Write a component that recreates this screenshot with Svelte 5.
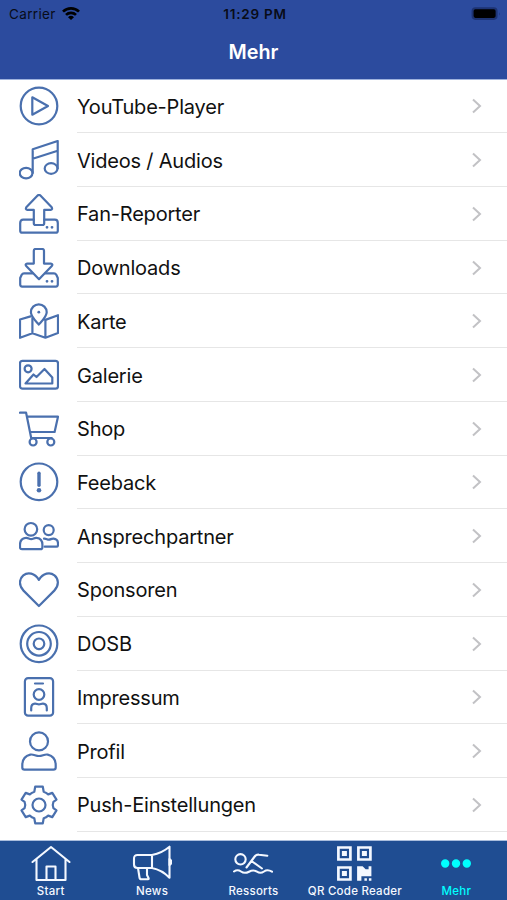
<script>
  const items = [
    { label: 'YouTube-Player', icon: 'play' },
    { label: 'Videos / Audios', icon: 'music' },
    { label: 'Fan-Reporter', icon: 'upload' },
    { label: 'Downloads', icon: 'download' },
    { label: 'Karte', icon: 'map' },
    { label: 'Galerie', icon: 'gallery' },
    { label: 'Shop', icon: 'cart' },
    { label: 'Feeback', icon: 'alert' },
    { label: 'Ansprechpartner', icon: 'people' },
    { label: 'Sponsoren', icon: 'heart' },
    { label: 'DOSB', icon: 'target' },
    { label: 'Impressum', icon: 'badge' },
    { label: 'Profil', icon: 'user' },
    { label: 'Push-Einstellungen', icon: 'gear' }
  ];

  const tabs = [
    { label: 'Start', icon: 'home' },
    { label: 'News', icon: 'news' },
    { label: 'Ressorts', icon: 'swim' },
    { label: 'QR Code Reader', icon: 'qr' },
    { label: 'Mehr', icon: 'more' }
  ];

  let active = $state('Mehr');
</script>

<div class="screen">
  <header>
    <div class="status">
      <div class="carrier">
        <span>Carrier</span>
        <svg width="18" height="14" viewBox="0 0 18 14">
          <g fill="none" stroke="#000" stroke-width="2.7">
            <path d="M1 4.6a11.5 11.5 0 0 1 16 0" />
            <path d="M4 7.9a7.2 7.2 0 0 1 10 0" />
          </g>
          <path d="M9 13L6 10.200a4.300 4.300 0 0 1 6 0z" />
        </svg>
      </div>
      <div class="time">11:29 PM</div>
      <div class="battery">
        <svg width="30" height="14" viewBox="0 0 30 14">
          <rect x="0.6" y="0.3" width="26" height="12.6" rx="3.8" fill="#1d3373" />
          <rect x="2.6" y="2.3" width="22" height="8.6" rx="1.8" />
          <path d="M28.200 5.200q1.400 1.700 0 3.400z" fill="#1d3373" />
        </svg>
      </div>
    </div>
    <h1>Mehr</h1>
  </header>

  <ul class="list">
    {#each items as item}
      <li>
        <svg class="icon" viewBox="0 0 40 40">
          {#if item.icon === 'play'}
            <circle cx="20" cy="20" r="18.3" />
            <path d="M13.3 11.3v17.4L29 20z" />
          {:else if item.icon === 'music'}
            <path d="M13.7 33V9.2L38.7 1v27.4M13.7 18.8l25-8" />
            <ellipse cx="7.1" cy="33.1" rx="6.4" ry="5.3" />
            <ellipse cx="32.1" cy="28.5" rx="6.4" ry="5.3" />
          {:else if item.icon === 'upload'}
            <path d="M14.8 25.7H4.2Q1.2 25.7 1.2 29v7.700a2 2 0 0 0 2 2h33.600a2 2 0 0 0 2-2V29q0-3.300-3-3.300H25.200" />
            <path d="M18.600 1.600L7.300 13.300q-1.200 2.400 1.200 2.600h6.300v13.400q0 1.700 1.700 1.700h7q1.700 0 1.700-1.700V15.900h6.300q2.400-.2 1.200-2.600L21.400 1.600q-1.400-1.400-2.800 0z" />
            <path class="dots" d="M28 33.300h.01M33 33.300h.01" />
          {:else if item.icon === 'download'}
            <path d="M13.600 25.300H5q-1.500 0-2.300 1.400L1.200 30v6.600a2 2 0 0 0 2 2h33.600a2 2 0 0 0 2-2V30l-1.500-3.300q-.8-1.400-2.300-1.400h-8.600" />
            <path d="M16.500 1h6.800q1.700 0 1.700 1.700v12.900h6.800q2.400.2 1 2.400L20 31.200 7.200 18q-1.400-2.200 1-2.400h6.600V2.700Q14.800 1 16.500 1z" />
            <path class="dots" d="M28 33.300h.01M33 33.300h.01" />
          {:else if item.icon === 'map'}
            <path d="M11.500 15.400L1 18.500v18.300l12.400-4.600 13 4.500L39 32V14.200l-12.600 4.700-.8-.3M13.400 17v15.200M26.400 18.900v17.800" />
            <path d="M19.800 23.600C17 20.300 11.900 15.600 11.900 11.200a7.900 7.900 0 0 1 15.800 0c0 4.400-5.100 9.100-7.900 12.400z" />
            <path class="dots" d="M19.800 11.200h.01" />
          {:else if item.icon === 'gallery'}
            <rect x="1" y="5.900" width="38" height="27.800" rx="2.500" />
            <circle cx="9.100" cy="13.800" r="3.500" />
            <path d="M6.500 28.500L14.500 19.500l3 2.500L25.500 14l7.800 8.500v6z" />
          {:else if item.icon === 'cart'}
            <path d="M.9 3.700h6.200L12.200 29h20.500M8 7.700h31L35.600 23H11.300" />
            <circle cx="14.100" cy="33" r="3.500" />
            <circle cx="31.800" cy="33" r="3.500" />
          {:else if item.icon === 'alert'}
            <circle cx="20" cy="19.800" r="18.300" />
            <path class="bar" d="M20 11.200v12" />
            <circle class="dot" cx="20" cy="28.200" r="2.300" />
          {:else if item.icon === 'people'}
            <circle cx="11.900" cy="13.300" r="6.300" />
            <path d="M3 33.200h18.400q2 0 2-2v-2.500q0-6-5.700-6.800c-2.400-.4-3.300 1.200-5.500 1.200s-3.100-1.600-5.500-1.200Q1 22.700 1 28.700v2.500q0 2 2 2z" />
            <circle cx="29.700" cy="14.100" r="5" />
            <path d="M25.700 30.700h11.600q1.700 0 1.700-1.700v-1.500q0-4.300-4.500-4.800c-2-.2-2.800.9-4.600.9s-2.600-1.100-4.900-.9" />
          {:else if item.icon === 'heart'}
            <path d="M19.900 36L4.500 20.600C-.6 15.500.2 8.700 4.300 5.300c4.600-3.700 11.400-2.300 15.600 4.500 4.200-6.800 11-8.200 15.600-4.500 4.100 3.400 4.900 10.200-.2 15.300z" />
          {:else if item.icon === 'target'}
            <circle cx="20" cy="19.800" r="18.300" />
            <circle cx="20" cy="19.800" r="11.800" />
            <circle cx="20" cy="19.800" r="5.300" />
          {:else if item.icon === 'badge'}
            <rect x="5.900" y="1.200" width="28.200" height="37.500" rx="3.200" />
            <circle cx="20" cy="17.500" r="5.300" />
            <path d="M16 6.500h8M12.200 33.500v-2.300q0-4.400 3.800-4.600c1.500-.1 2.500.8 4 .8s2.500-.9 4-.8q3.800.2 3.800 4.600v2.300" />
          {:else if item.icon === 'user'}
            <circle cx="20" cy="10.400" r="9" />
            <path d="M5.500 38.600h29q2.200 0 2.200-2.200V34q0-8.500-8-10.400c-3-.7-5.300 1.400-8.700 1.400s-5.700-2.100-8.700-1.400q-8 1.900-8 10.400v2.400q0 2.200 2.200 2.200z" />
          {:else}
            <path d="M16.200 1.700h7.600l.9 5.100q2.500.8 4.500 2.600l4.100-1.500 4.200 6.800-3.100 2.200q-1.300 3.100 0 6.200l3.100 2.200-4.200 6.800-4.100-1.500q-2 1.800-4.500 2.600l-.9 5.100h-7.600l-.9-5.100q-2.500-.8-4.500-2.600l-4.100 1.500-4.200-6.800 3.100-2.200q1.300-3.100 0-6.200l-3.100-2.200 4.200-6.800 4.100 1.500q2-1.800 4.500-2.600z" />
            <circle cx="20" cy="20" r="6.500" />
          {/if}
        </svg>
        <div class="row">
          <span>{item.label}</span>
          <svg class="chevron" viewBox="0 0 10 16">
            <path d="M1 1.500L8 8l-7 6.500" />
          </svg>
        </div>
      </li>
    {/each}
  </ul>

  <nav>
    {#each tabs as tab}
      <button class:active={active === tab.label} onclick={() => (active = tab.label)}>
        <svg viewBox="0 0 40 40">
          {#if tab.icon === 'home'}
            <path d="M1.500 18L20 3 38.500 18M5.500 15v21h29V15M15.500 36V22.500h9V36" />
          {:else if tab.icon === 'news'}
            <path d="M20 11H5.500Q2 11 2 14.500v6Q2 24 5.500 24H20zM20 11q10-2 17.500-8.300v31Q30 26 20 24M6 24l1.500 9.500q.3 1.800 2 1.800h6.500q1 0 .6-1L15 31V24.500" />
            <path d="M37.500 15q4 3 0 6z" fill="currentColor" />
          {:else if tab.icon === 'swim'}
            <circle cx="7.500" cy="15.300" r="5.200" />
            <path d="M13.500 23.500L21.700 12.500q1.700-2.200 4.300-1.800l8.300 1M18.500 17L29 24.500M1 27.500q3.500-2.500 7 0t8 .2 8 0 7-.2 8 .2" />
          {:else if tab.icon === 'qr'}
            <path class="frame" d="M3.400 3.500h12v12h-12zM23.400 3.500h12v12h-12zM3.400 23.500h12v12h-12z" />
            <path class="solid" d="M6.900 7h5v5h-5zM26.900 7h5v5h-5zM6.900 27h5v5h-5zM22.100 22.200h5.500l3 3h3v-3h2.800v10h-10v4.500h-4.300zM29.400 34.200h2.500v2.500h-2.500zM33.900 34.200h2.500v2.500h-2.500z" />
          {:else}
            <path class="solid" d="M5 19.500a4.200 4.200 0 1 0 8.400 0a4.200 4.200 0 1 0-8.400 0zM15.800 19.500a4.200 4.200 0 1 0 8.400 0a4.200 4.200 0 1 0-8.400 0zM26.600 19.500a4.200 4.200 0 1 0 8.400 0a4.200 4.200 0 1 0-8.400 0z" />
          {/if}
        </svg>
        <span>{tab.label}</span>
      </button>
    {/each}
  </nav>
</div>

<style>
  :global(body) {
    margin: 0;
    background: #fff;
  }

  .screen {
    display: flex;
    flex-direction: column;
    width: 100%;
    height: 900px;
    overflow: hidden;
    font-family: Inter, 'Liberation Sans', sans-serif;
    color: #111;
  }

  header {
    box-sizing: border-box;
    flex: none;
    height: 79.6px;
    background: #2c4b9e;
    border-bottom: 1px solid #9fb2dd;
  }

  .status {
    display: grid;
    grid-template-columns: 1fr auto 1fr;
    align-items: center;
    height: 27px;
    padding: 0 6px 0 9px;
    color: #080c18;
    font-size: 13.5px;
  }

  .carrier {
    display: flex;
    align-items: center;
    gap: 6px;
  }

  .carrier span {
    letter-spacing: 0.35px;
  }

  .time {
    font-weight: 600;
    letter-spacing: 0.8px;
  }

  .battery {
    display: flex;
    justify-content: flex-end;
  }

  h1 {
    margin: 0;
    color: #fff;
    font-size: 19.8px;
    font-weight: 600;
    line-height: 51px;
    text-align: center;
  }

  .list {
    flex: none;
    margin: 0;
    padding: 0;
    list-style: none;
  }

  li {
    display: flex;
    align-items: center;
    height: 53.73px;
    padding-left: 19px;
  }

  .icon {
    flex: none;
    width: 40px;
    height: 40px;
    margin-right: 18px;
    fill: none;
    stroke: #4a70ae;
    stroke-width: 2.2;
    stroke-linejoin: round;
    stroke-linecap: round;
  }

  .icon .dots {
    stroke-width: 2.8;
  }

  .icon .bar {
    stroke-width: 3.4;
  }

  .icon .dot {
    fill: #4a70ae;
    stroke: none;
  }

  .row {
    box-sizing: border-box;
    display: flex;
    flex: 1;
    align-items: center;
    justify-content: space-between;
    height: 100%;
    padding: 1px 25px 0 0;
    border-bottom: 1px solid #e6e6e6;
    font-size: 20px;
    letter-spacing: -0.2px;
  }

  .row span {
    padding-top: 1px;
  }

  .chevron {
    width: 10px;
    height: 16px;
    fill: none;
    stroke: #c2c2c5;
    stroke-width: 2;
  }

  nav {
    box-sizing: border-box;
    display: grid;
    grid-template-columns: repeat(5, 1fr);
    flex: none;
    height: 60px;
    margin-top: auto;
    border-top: 1px solid #a9bddd;
    background: #1f4d92;
  }

  button {
    display: flex;
    flex-direction: column;
    align-items: center;
    padding: 3px 0 0;
    border: 0;
    background: none;
    color: #f4f8ff;
    font: 500 11.5px Inter, sans-serif;
    letter-spacing: 0.25px;
    white-space: nowrap;
  }

  button svg {
    flex: none;
    width: 40px;
    height: 40px;
    fill: none;
    stroke: currentColor;
    stroke-width: 2.1;
    stroke-linejoin: round;
    stroke-linecap: round;
  }

  button .frame {
    stroke-width: 2.7;
    stroke-linejoin: miter;
  }

  button .solid {
    fill: currentColor;
    stroke: none;
  }

  button.active {
    color: #0ff;
  }
</style>
